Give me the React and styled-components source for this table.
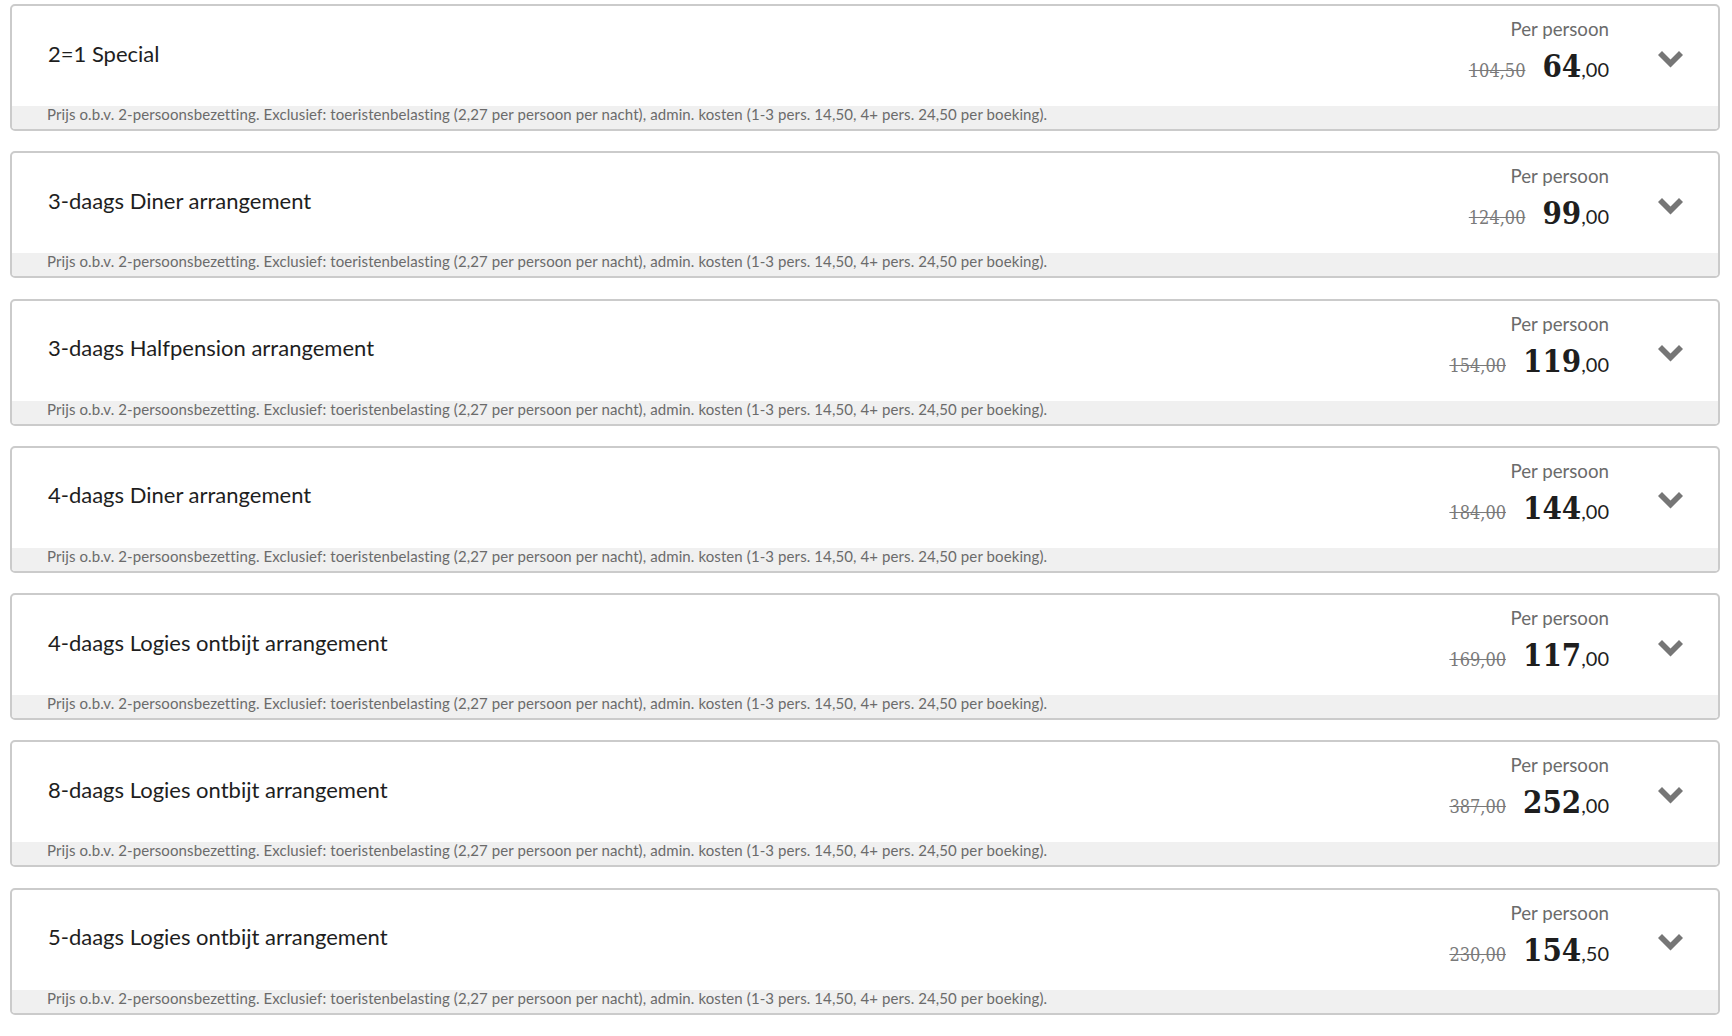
import React from "react";
import styled, { createGlobalStyle } from "styled-components";

const GlobalStyle = createGlobalStyle`
  body {
    margin: 0;
    background: #fff;
    font-family: "Lato", "Open Sans", sans-serif;
  }
`;

const arrangements = [
  { title: "2=1 Special", oldPrice: "104,50", euros: "64", cents: "00" },
  { title: "3-daags Diner arrangement", oldPrice: "124,00", euros: "99", cents: "00" },
  { title: "3-daags Halfpension arrangement", oldPrice: "154,00", euros: "119", cents: "00" },
  { title: "4-daags Diner arrangement", oldPrice: "184,00", euros: "144", cents: "00" },
  { title: "4-daags Logies ontbijt arrangement", oldPrice: "169,00", euros: "117", cents: "00" },
  { title: "8-daags Logies ontbijt arrangement", oldPrice: "387,00", euros: "252", cents: "00" },
  { title: "5-daags Logies ontbijt arrangement", oldPrice: "230,00", euros: "154", cents: "50" },
];

const FOOTNOTE =
  "Prijs o.b.v. 2-persoonsbezetting. Exclusief: toeristenbelasting (2,27 per persoon per nacht), admin. kosten (1-3 pers. 14,50, 4+ pers. 24,50 per boeking).";

const List = styled.div`
  display: flex;
  flex-direction: column;
  gap: 20.3px;
  padding: 4px 12px 20px 10px;
`;

const Card = styled.div`
  display: flex;
  flex-direction: column;
  height: 127px;
  box-sizing: border-box;
  border: 2px solid #cbcbcb;
  border-radius: 5px;
  background: #fff;
  overflow: hidden;
`;

const Main = styled.div`
  flex: 1;
  display: flex;
  align-items: center;
  padding-left: 36px;
`;

const Title = styled.div`
  flex: 1;
  font-size: 22px;
  color: #1e1e1e;
  margin-top: -6px;
`;

const PriceBlock = styled.div`
  align-self: flex-start;
  display: flex;
  flex-direction: column;
  align-items: flex-end;
  padding-top: 12px;
  margin-right: 13px;
`;

const PerPerson = styled.div`
  font-size: 18.7px;
  line-height: 22px;
  color: #6b6b6b;
`;

const PriceRow = styled.div`
  display: flex;
  align-items: baseline;
  margin-top: 7px;
`;

const OldPrice = styled.span`
  font-family: "DejaVu Serif Condensed", "DejaVu Serif", serif;
  font-stretch: condensed;
  font-size: 18px;
  color: #7a7a7a;
  text-decoration: line-through;
  margin-right: 17px;
`;

const Euros = styled.span`
  font-family: "DejaVu Serif Condensed", "DejaVu Serif", serif;
  font-stretch: condensed;
  font-weight: bold;
  font-size: 31px;
  line-height: 38px;
  color: #1e1e1e;
`;

const Cents = styled.span`
  font-size: 20px;
  color: #1e1e1e;
`;

const Toggle = styled.div`
  width: 96px;
  align-self: stretch;
  display: flex;
  align-items: center;
  justify-content: center;
  padding-top: 6px;
  cursor: pointer;
`;

const Footer = styled.div`
  height: 23px;
  line-height: 17px;
  background: #f0f0f0;
  padding-left: 35px;
  font-size: 15px;
  letter-spacing: 0.1px;
  color: #6b6b6b;
  white-space: nowrap;
`;

const Chevron = () => (
  <svg width="25" height="17" viewBox="0 0 25 17">
    <polygon points="0,4 4,0 12.5,8.5 21,0 25,4 12.5,16.5" fill="#767676" />
  </svg>
);

const ArrangementCard = ({ title, oldPrice, euros, cents }) => (
  <Card>
    <Main>
      <Title>{title}</Title>
      <PriceBlock>
        <PerPerson>Per persoon</PerPerson>
        <PriceRow>
          <OldPrice>{oldPrice}</OldPrice>
          <Euros>{euros}</Euros>
          <Cents>,{cents}</Cents>
        </PriceRow>
      </PriceBlock>
      <Toggle>
        <Chevron />
      </Toggle>
    </Main>
    <Footer>{FOOTNOTE}</Footer>
  </Card>
);

export default function App() {
  return (
    <>
      <GlobalStyle />
      <List>
        {arrangements.map((a) => (
          <ArrangementCard key={a.title} {...a} />
        ))}
      </List>
    </>
  );
}
